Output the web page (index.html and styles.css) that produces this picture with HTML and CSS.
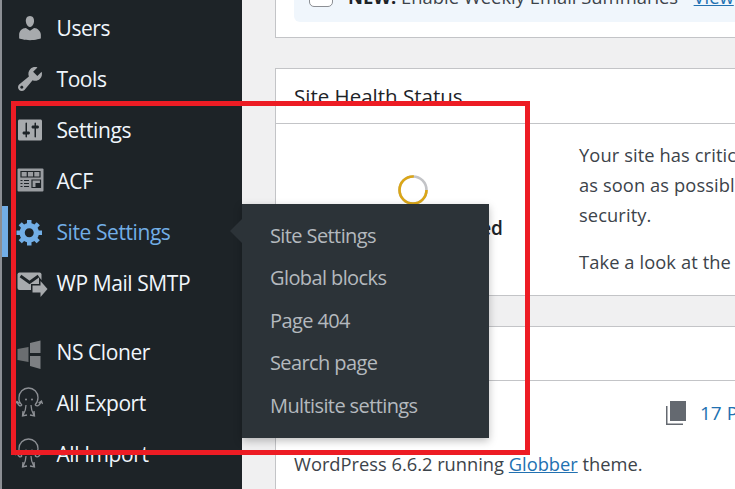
FILE: index.html
```html
<!DOCTYPE html>
<html lang="en">
<head>
<meta charset="utf-8">
<title>Dashboard</title>
<link rel="stylesheet" href="styles.css">
</head>
<body>
<div class="page">
  <div class="strip"></div>
  <nav class="sidebar">
    <ul class="menu">
      <li class="item"><svg class="icon" viewBox="0 0 20 20"><path d="M10 9.25c-2.27 0-2.73-3.44-2.73-3.44C7 4.02 7.82 2 9.97 2c2.16 0 2.98 2.02 2.71 3.81 0 0-.41 3.44-2.68 3.44zm0 2.57L12.72 10c2.39 0 4.52 2.33 4.52 4.53v2.49s-3.65 1.13-7.24 1.13c-3.65 0-7.24-1.13-7.24-1.13v-2.49c0-2.25 1.94-4.48 4.47-4.48z"/></svg><span>Users</span></li>
      <li class="item"><svg class="icon" viewBox="0 0 20 20"><path d="M16.68 9.77c-1.34 1.34-3.3 1.67-4.95.99l-5.41 6.52c-.99.99-2.59.99-3.58 0s-.99-2.59 0-3.57l6.52-5.42c-.68-1.65-.35-3.61.99-4.95 1.28-1.28 3.12-1.62 4.72-1.06l-2.89 2.89 2.82 2.82 2.86-2.87c.53 1.58.18 3.39-1.08 4.67zM3.81 16.21c.4.39 1.04.39 1.43 0 .4-.4.4-1.04 0-1.43-.39-.4-1.03-.4-1.43 0-.39.39-.39 1.03 0 1.43z"/></svg><span>Tools</span></li>
      <li class="item"><svg class="icon" viewBox="0 0 20 20"><path d="M18 16V4c0-.55-.45-1-1-1H3c-.55 0-1 .45-1 1v12c0 .55.45 1 1 1h14c.55 0 1-.45 1-1zM8 11h1c.55 0 1 .45 1 1s-.45 1-1 1H8v1.5c0 .28-.22.5-.5.5s-.5-.22-.5-.5V13H6c-.55 0-1-.45-1-1s.45-1 1-1h1V5.5c0-.28.22-.5.5-.5s.5.22.5.5V11zm5-2h-1c-.55 0-1-.45-1-1s.45-1 1-1h1V5.5c0-.28.22-.5.5-.5s.5.22.5.5V7h1c.55 0 1 .45 1 1s-.45 1-1 1h-1v5.500c0 .28-.22.5-.5.5s-.5-.22-.5-.5V9z"/></svg><span>Settings</span></li>
      <li class="item"><svg class="icon" viewBox="-2.500 -2.500 30 30"><rect class="acf-box" width="26" height="23" rx="1"/><path class="acf-line" d="M3.500 3h19v5.500h-19zM9.800 3v5.500M16.200 3v5.500M6.500 12h5M6.500 15h5M6.500 18h5M3 12h2M3 15h2M3 18h2M14.500 11.500h8.500v7.500h-8.500z"/><rect class="acf-fill" x="18" y="14.500" width="5" height="4.500"/></svg><span>ACF</span></li>
      <li class="item active"><svg class="icon" viewBox="0 0 20 20"><path d="M18 12h-2.180c-.17.7-.44 1.350-.81 1.930l1.540 1.540-2.100 2.100-1.540-1.540c-.58.36-1.230.63-1.910.79V19H8v-2.180c-.68-.16-1.330-.43-1.910-.79l-1.540 1.540-2.120-2.120 1.540-1.540c-.36-.58-.63-1.230-.79-1.910H1V9.030h2.170c.16-.7.44-1.350.8-1.940L2.430 5.550l2.100-2.100 1.540 1.540c.58-.37 1.240-.64 1.930-.81V2h3v2.180c.68.16 1.330.43 1.910.79l1.540-1.540 2.120 2.120-1.540 1.540c.36.59.64 1.240.8 1.940H18V12zm-8.500 1.500c1.660 0 3-1.340 3-3s-1.340-3-3-3-3 1.340-3 3 1.340 3 3 3z"/></svg><span>Site Settings</span>
        <ul class="flyout">
          <li>Site Settings</li>
          <li>Global blocks</li>
          <li>Page 404</li>
          <li>Search page</li>
          <li>Multisite settings</li>
        </ul>
      </li>
      <li class="item"><svg class="icon" viewBox="-2.500 -4.500 30 30"><rect width="24" height="17.500" rx="2"/><path class="cut" d="M3 3.500 12 10l9-6.500"/><path class="arrow" d="M15 13h8V8.500l7 8-7 8V20h-8z"/></svg><span>WP Mail SMTP</span></li>
      <li class="item gap"><svg class="icon dim" viewBox="0 0 30 30"><path d="M2.500 12 13.500 10v15l-11-2z"/><path class="dim-light" d="M15 6l10.500-2.500V16H15z"/><path class="dim-light" d="M15 19h10.500v13L15 29z"/></svg><span>NS Cloner</span></li>
      <li class="item"><svg class="icon line" viewBox="0 0 30 30"><path d="M7 17C3.500 14 4 9.500 4 9.500a9.500 9.500 0 0 1 19 0c0 3.500-1 5.500-3 7.500M7 17c-2 2-4 0-5-3M0 16l2-2.500 2.500 2M20 17c3 2 5 0 6-3.500M23.500 15l3-2 1 3M11 17c0 5-1 7-3 10.500M16 17c0 5 1 7 3 10.500M8 23l-.5 5 4.500-1M19 23l.5 5-4.500-1"/><circle class="dot" cx="11" cy="11.500" r="1"/><circle class="dot" cx="17" cy="11.500" r="1"/></svg><span>All Export</span></li>
      <li class="item"><svg class="icon line" viewBox="0 0 30 30"><path d="M7 17C3.500 14 4 9.500 4 9.500a9.500 9.500 0 0 1 19 0c0 3.500-1 5.500-3 7.500M7 17c-2 2-4 0-5-3M0 16l2-2.500 2.500 2M20 17c3 2 5 0 6-3.500M23.500 15l3-2 1 3M11 17c0 5-1 7-3 10.500M16 17c0 5 1 7 3 10.500M8 23l-.5 5 4.500-1M19 23l.5 5-4.500-1"/><circle class="dot" cx="11" cy="11.500" r="1"/><circle class="dot" cx="17" cy="11.500" r="1"/></svg><span>All Import</span></li>
    </ul>
  </nav>
  <main class="content">
    <section class="card first">
      <div class="notice"><span class="check"></span><span class="notice-text"><b class="new">NEW!</b> Enable Weekly Email Summaries - <a href="#">View</a></span></div>
    </section>
    <section class="card">
      <h2 class="card-head">Site Health Status</h2>
      <div class="health">
        <div class="status">
          <svg class="ring" viewBox="0 0 30 30"><circle class="ring-back" cx="15" cy="15" r="13.500"/><circle class="ring-front" cx="15" cy="15" r="13.500" pathLength="100" stroke-dasharray="76 100"/></svg>
          <strong>Should be improved</strong>
        </div>
        <div class="text">
          <p>Your site has critical issues that should be addressed<br>as soon as possible to improve its performance and<br>security.</p>
          <p>Take a look at the 3 items on the Site Health screen.</p>
        </div>
      </div>
    </section>
    <section class="card glance-card">
      <h2 class="card-head">At a Glance</h2>
      <div class="glance">
        <div class="counts">
          <svg class="pages" viewBox="0 0 20 24"><path d="M0 5h1.500v17.500H17V24H0z"/><path d="M4 0h16v20H4z"/></svg>
          <a href="#">17 Pages</a>
        </div>
        <p>WordPress 6.6.2 running <a class="theme" href="#">Globber</a> theme.</p>
      </div>
    </section>
  </main>
</div>
<div class="highlight"></div>
</body>
</html>
```
FILE: styles.css
```css
* { box-sizing: border-box; }
html, body { margin: 0; height: 100%; overflow: hidden; }
body { font-family: "Open Sans", "Noto Sans", sans-serif; background: #f0f0f1; color: #3c434a; }
ul { list-style: none; margin: 0; padding: 0; }
a { color: #2271b1; text-decoration: none; }

.page { display: flex; height: 489px; overflow: hidden; }
.strip { flex: 0 0 2px; background: #8c8f94; }

.sidebar { flex: 0 0 240px; background: #1d2327; position: relative; z-index: 2; padding-top: 2px; }
.item { position: relative; display: flex; align-items: center; height: 51px; padding-left: 6.500px; border-left: 6px solid transparent; color: #f0f6fc; font-size: 21px; letter-spacing: -.42px; white-space: nowrap; }
.item > span { margin-left: 12px; }
.icon { flex: 0 0 30px; width: 30px; height: 30px; fill: #a7aaad; overflow: visible; }
.item.gap { margin-top: 18px; }
.active { border-left-color: #72aee6; color: #72aee6; }
.active .icon { fill: #72aee6; }
.acf-box { fill: #9a9da1; }
.acf-line { fill: none; stroke: #1d2327; stroke-width: 1.200; }
.acf-fill { fill: #1d2327; }
.cut { fill: none; stroke: #1d2327; stroke-width: 2.800; }
.arrow { stroke: #1d2327; stroke-width: 3; paint-order: stroke; }
.dim { fill: #6b6e71; }
.dim-light { fill: #7d8083; }
.line { fill: none; stroke: #8c8f94; stroke-width: 1.300; }
.dot { fill: #8c8f94; stroke: none; }

.flyout { position: absolute; left: 234px; top: -2px; width: 247px; height: 234px; padding: 10.500px 0 0 28px; background: #2c3338; color: #b4b9be; font-size: 20px; letter-spacing: -.6px; box-shadow: 0 3px 8px rgba(0, 0, 0, .25); }
.flyout::before { content: ""; position: absolute; left: -12px; top: 15px; border: 12px solid transparent; border-left: 0; border-right-color: #2c3338; }
.flyout li { height: 42.500px; line-height: 42.500px; }

.content { flex: 1 0 0; min-width: 0; padding-left: 33px; margin-top: -30px; position: relative; z-index: 1; }
.card { background: #fff; border: 1px solid #c3c4c7; margin: 0 -20px 30px 0; }
.first { height: 68px; padding: 10px 0 0 18px; margin-bottom: 30px; }
.notice { display: flex; align-items: flex-start; height: 41px; padding: 1px 0 0 15px; gap: 15px; background: #f0f6fc; border-radius: 6px; font-size: 18.400px; white-space: nowrap; }
.check { flex: 0 0 24px; height: 24px; margin-top: 1px; background: #fff; border: 1px solid #8c8f94; border-radius: 5px; }
.notice-text { margin-top: 3px; line-height: 24px; }
.notice-text a { text-decoration: underline; }
.new { font-weight: 700; color: #1d2327; }
.card-head { height: 55px; margin: 0; padding: 14px 18px 0; border-bottom: 1px solid #c3c4c7; font-size: 20.500px; line-height: 27px; font-weight: 500; color: #1d2327; white-space: nowrap; overflow: hidden; }
.glance-card .card-head { height: 54px; }

.health { display: flex; height: 171px; }
.status { flex: 0 0 303px; padding: 51px 0 0 122px; display: flex; flex-direction: column; align-items: flex-start; }
.ring { width: 30px; height: 30px; }
.ring-back, .ring-front { fill: none; stroke-width: 2.600; }
.ring-back { stroke: #c3c4c7; }
.ring-front { stroke: #dba617; }
.status strong { margin: 8px 0 0 -79px; font-size: 19px; line-height: 30px; font-weight: 600; color: #1d2327; white-space: nowrap; }
.text { flex: 1 0 0; padding-top: 16px; font-size: 18.300px; line-height: 30px; letter-spacing: .1px; white-space: nowrap; }
.text p { margin: 0 0 17px; }

.glance { padding: 16px 18px 0; font-size: 18.300px; height: 110px; }
.counts { display: flex; align-items: center; gap: 14px; margin-left: 372px; height: 31px; white-space: nowrap; font-size: 19px; }
.pages { flex: 0 0 20px; width: 20px; height: 24px; fill: #646970; }
.glance p { margin: 21px 0 0; line-height: 30px; white-space: nowrap; }
.theme { text-decoration: underline; }

.highlight { position: absolute; left: 11px; top: 101px; width: 519px; height: 354px; border: 5px solid #ed1c24; z-index: 5; }
```
